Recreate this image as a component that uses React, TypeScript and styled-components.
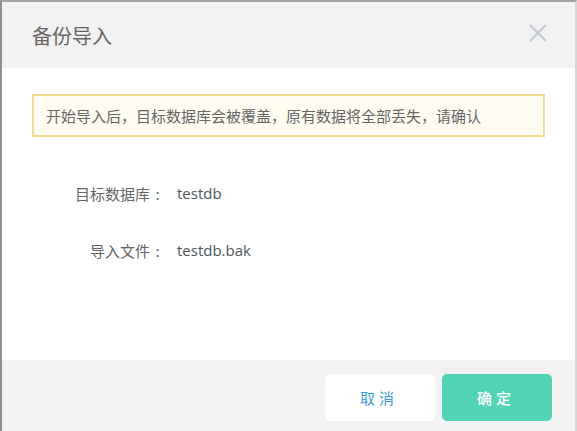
import React from "react";
import styled, { createGlobalStyle } from "styled-components";

const GlobalStyle = createGlobalStyle`
  html, body {
    margin: 0;
    padding: 0;
    background: #ffffff;
  }
  body {
    font-family: "Noto Sans", "Noto Sans CJK SC", sans-serif;
  }
  * { box-sizing: border-box; }
`;

const Frame = styled.div`
  width: 577px;
  height: 431px;
  border-top: 2px solid #a3a3a3;
  border-left: 2px solid #8e8e8e;
  border-right: 2px solid #d6d6d6;
  display: flex;
  flex-direction: column;
  background: #ffffff;
`;

const Header = styled.div`
  height: 66px;
  background: #f2f2f2;
  display: flex;
  align-items: center;
  justify-content: space-between;
  padding: 0 28px 0 30px;
`;

const Title = styled.h1`
  margin: 0;
  font-size: 20px;
  font-weight: 400;
  color: #666666;
  font-family: "Noto Sans CJK SC", sans-serif;
  line-height: 1;
  padding-top: 2px;
`;

const CloseButton = styled.button`
  border: none;
  background: transparent;
  padding: 0;
  width: 18px;
  height: 18px;
  display: flex;
  cursor: pointer;
  margin-top: -4px;
`;

const Body = styled.div`
  flex: 1;
  padding: 26px 30px 0 30px;
  background: #ffffff;
`;

const Warning = styled.div`
  height: 43px;
  border: 2px solid #f5d98f;
  background: #fffcf1;
  display: flex;
  align-items: center;
  padding: 0 12px;
  font-family: "Noto Sans CJK SC", sans-serif;
  font-size: 15px;
  color: #666666;
`;

const InfoList = styled.div`
  margin-top: 44px;
  display: flex;
  flex-direction: column;
  gap: 33px;
`;

const InfoRow = styled.div`
  display: grid;
  grid-template-columns: 133px 1fr;
  column-gap: 12px;
  height: 24px;
  align-items: center;
`;

const Label = styled.span`
  text-align: right;
  font-family: "Noto Sans CJK SC", sans-serif;
  font-size: 15px;
  color: #666666;
`;

const Colon = styled.span`
  display: inline-block;
  width: 15px;
  text-align: center;
`;

const Value = styled.span`
  font-family: "Open Sans", "Noto Sans CJK SC", sans-serif;
  font-size: 15px;
  color: #505760;
`;

const Footer = styled.div`
  height: 71px;
  background: #f2f2f2;
  display: flex;
  justify-content: flex-end;
  align-items: flex-start;
  padding: 14px 23px 0 0;
  gap: 7px;
`;

const Button = styled.button<{ $primary?: boolean }>`
  width: 110px;
  height: 47px;
  border-radius: 5px;
  border: none;
  font-family: "Noto Sans CJK SC", sans-serif;
  font-size: 15px;
  letter-spacing: 4px;
  padding-left: 4px;
  cursor: pointer;
  background: ${(p) => (p.$primary ? "#52d3b5" : "#ffffff")};
  color: ${(p) => (p.$primary ? "#ffffff" : "#3d9be0")};
  font-weight: ${(p) => (p.$primary ? 500 : 400)};
`;

const CloseIcon = () => (
  <svg width="18" height="18" viewBox="0 0 18 18">
    <path d="M1 1 L17 17 M17 1 L1 17" stroke="#c2c9d0" strokeWidth="2" fill="none" />
  </svg>
);

export default function App() {
  return (
    <>
      <GlobalStyle />
      <Frame>
        <Header>
          <Title>备份导入</Title>
          <CloseButton aria-label="关闭">
            <CloseIcon />
          </CloseButton>
        </Header>
        <Body>
          <Warning>开始导入后，目标数据库会被覆盖，原有数据将全部丢失，请确认</Warning>
          <InfoList>
            <InfoRow>
              <Label>
                目标数据库<Colon>:</Colon>
              </Label>
              <Value>testdb</Value>
            </InfoRow>
            <InfoRow>
              <Label>
                导入文件<Colon>:</Colon>
              </Label>
              <Value>testdb.bak</Value>
            </InfoRow>
          </InfoList>
        </Body>
        <Footer>
          <Button>取消</Button>
          <Button $primary>确定</Button>
        </Footer>
      </Frame>
    </>
  );
}
